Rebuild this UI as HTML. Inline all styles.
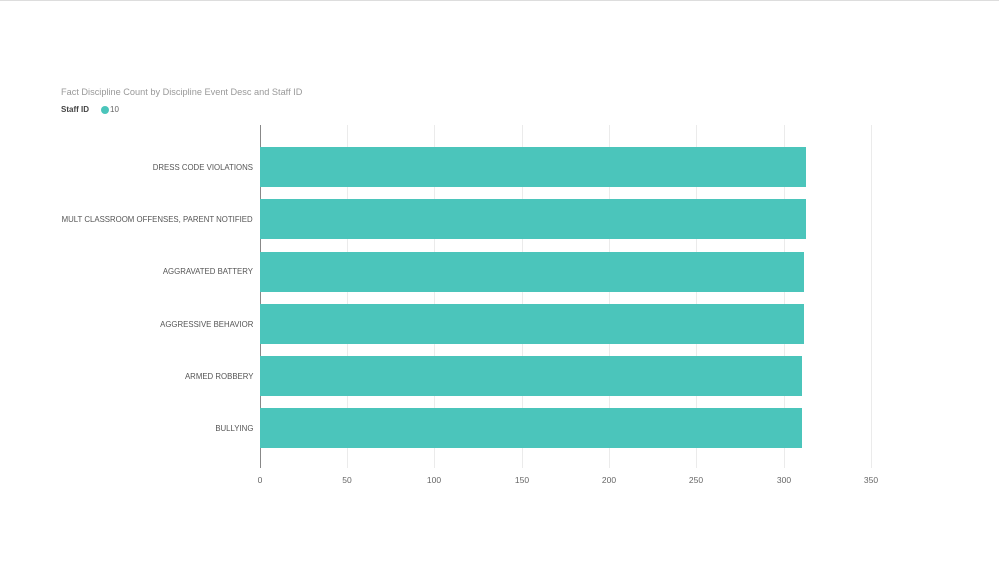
<!DOCTYPE html><html><head><style>
body{margin:0;width:999px;height:575px;background:#fff;font-family:"Liberation Sans",sans-serif;position:relative;overflow:hidden}
.t{position:absolute;white-space:nowrap}
.g{position:absolute;top:125px;height:343px;width:1px;background:#ebebeb}
.b{position:absolute;left:260px;height:40px;background:#4bc5bb}
.l{position:absolute;right:746px;font-size:8.5px;color:#555;white-space:nowrap;transform:scaleX(0.92);transform-origin:right center}
.x{position:absolute;top:475px;font-size:8.5px;color:#666;transform:translateX(-50%)}
</style></head><body>
<div style="position:absolute;top:0;left:0;right:0;height:1px;background:#ddd"></div>
<div class="t" style="left:61px;top:87px;font-size:9.2px;color:#999">Fact Discipline Count by Discipline Event Desc and Staff ID</div>
<div class="t" style="left:61px;top:105px;font-size:8px;color:#444;font-weight:bold">Staff ID</div>
<div style="position:absolute;left:101px;top:106px;width:8px;height:8px;border-radius:50%;background:#4bc5bb"></div>
<div class="t" style="left:110px;top:105px;font-size:8px;color:#666">10</div>
<div class="g" style="left:347px"></div><div class="g" style="left:434px"></div><div class="g" style="left:522px"></div><div class="g" style="left:609px"></div><div class="g" style="left:696px"></div><div class="g" style="left:784px"></div><div class="g" style="left:871px"></div>
<div style="position:absolute;left:260px;top:125px;height:343px;width:1px;background:#888"></div>
<div class="b" style="top:147px;width:546px"></div>
<div class="b" style="top:199px;width:546px"></div>
<div class="b" style="top:252px;width:544px"></div>
<div class="b" style="top:304px;width:544px"></div>
<div class="b" style="top:356px;width:542px"></div>
<div class="b" style="top:408px;width:542px"></div>
<div class="l" style="top:162px">DRESS CODE VIOLATIONS</div>
<div class="l" style="top:214px">MULT CLASSROOM OFFENSES, PARENT NOTIFIED</div>
<div class="l" style="top:266px">AGGRAVATED BATTERY</div>
<div class="l" style="top:319px">AGGRESSIVE BEHAVIOR</div>
<div class="l" style="top:371px">ARMED ROBBERY</div>
<div class="l" style="top:423px">BULLYING</div>
<div class="x" style="left:260px">0</div><div class="x" style="left:347px">50</div><div class="x" style="left:434px">100</div><div class="x" style="left:522px">150</div><div class="x" style="left:609px">200</div><div class="x" style="left:696px">250</div><div class="x" style="left:784px">300</div><div class="x" style="left:871px">350</div>
</body></html>
